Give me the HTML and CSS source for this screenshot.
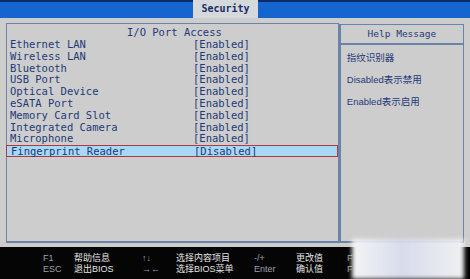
FILE: index.html
```html
<!DOCTYPE html>
<html lang="zh">
<head>
    <meta charset="UTF-8">
    <title>Security - I/O Port Access</title>
    <link rel="stylesheet" href="styles.css">
</head>
<body>
    <!-- Barre des onglets -->
    <div class="topbar">
        <div class="tab">Security</div>
    </div>

    <div class="main">
        <!-- Liste des ports -->
        <div class="panel-left">
            <div class="title">I/O Port Access</div>
            <div class="row"><span class="name">Ethernet LAN</span><span class="val">[Enabled]</span></div>
            <div class="row"><span class="name">Wireless LAN</span><span class="val">[Enabled]</span></div>
            <div class="row"><span class="name">Bluetooth</span><span class="val">[Enabled]</span></div>
            <div class="row"><span class="name">USB Port</span><span class="val">[Enabled]</span></div>
            <div class="row"><span class="name">Optical Device</span><span class="val">[Enabled]</span></div>
            <div class="row"><span class="name">eSATA Port</span><span class="val">[Enabled]</span></div>
            <div class="row"><span class="name">Memory Card Slot</span><span class="val">[Enabled]</span></div>
            <div class="row"><span class="name">Integrated Camera</span><span class="val">[Enabled]</span></div>
            <div class="row"><span class="name">Microphone</span><span class="val">[Enabled]</span></div>
            <div class="row selected"><span class="name">Fingerprint Reader</span><span class="val">[Disabled]</span></div>
        </div>

        <!-- Aide -->
        <div class="panel-right">
            <div class="help-title">Help Message</div>
            <div class="help-body">
                <p>指纹识别器</p>
                <p>Disabled表示禁用</p>
                <p>Enabled表示启用</p>
            </div>
        </div>
    </div>

    <!-- Touches -->
    <div class="footer">
        <span class="key">F1</span><span class="desc">帮助信息</span>
        <span class="key">↑↓</span><span class="desc">选择内容项目</span>
        <span class="key">-/+</span><span class="desc">更改值</span>
        <span class="key">F</span>
        <span class="key">ESC</span><span class="desc">退出BIOS</span>
        <span class="key">→←</span><span class="desc">选择BIOS菜单</span>
        <span class="key">Enter</span><span class="desc">确认值</span>
        <span class="key">F</span>
        <div class="watermark"></div>
    </div>
</body>
</html>
```

FILE: styles.css
```css
body {
    margin: 0;
    width: 470px;
    height: 279px;
    overflow: hidden;
    background-color: #cdcdcd;
    font-family: "DejaVu Sans Mono", "Noto Sans CJK SC", monospace;
    color: #1d3a78;
}
.topbar {
    height: 16px;
    background-color: #1565d0;
    border-top: 2px solid #0c2a6a;
    display: flex;
    padding-left: 193px;
}
.tab {
    width: 65px;
    margin-top: -2px;
    height: 18px;
    background-color: #d6d9dc;
    color: #1a2e66;
    font-weight: bold;
    font-size: 10px;
    text-align: center;
    line-height: 18px;
}
.main {
    display: flex;
    height: 220px;
    padding: 5px 6px 0 6px;
}
.panel-left {
    width: 333px;
    border: 1px solid #6a84a8;
    border-bottom-width: 2px;
    font-size: 10.5px;
}
.title {
    text-align: center;
    line-height: 12px;
    padding: 2px 0 0 4px;
    height: 13px;
}
.row {
    display: flex;
    height: 11.8px;
    line-height: 11.8px;
    padding-left: 3px;
    box-sizing: border-box;
}
.row .name {
    width: 183px;
}
.selected {
    background-color: #a9d8f6;
    border: 1px solid #b0383e;
    margin-left: -1px;
    padding-left: 4px;
}
.panel-right {
    width: 123px;
    margin-top: 1px;
    border: 1px solid #6a84a8;
    border-left: 2px solid #6a84a8;
    border-bottom-width: 2px;
    font-size: 9.5px;
}
.help-title {
    text-align: center;
    height: 18px;
    line-height: 18px;
    border-bottom: 2px solid #6a84a8;
    font-family: "DejaVu Sans Mono", monospace;
}
.help-body {
    padding: 7px 0 0 6px;
    font-family: "Liberation Sans", "Noto Sans CJK SC", sans-serif;
    font-size: 9.5px;
}
.help-body p {
    margin: 0 0 10px 0;
    line-height: 12px;
}
.footer {
    position: relative;
    margin-top: 4px;
    height: 34px;
    background-color: #050505;
    display: grid;
    grid-template-columns: 31px 68px 34px 78px 42px 51px 10px;
    grid-auto-rows: 11px;
    padding: 6px 0 0 43px;
    box-sizing: border-box;
    font-family: "Liberation Sans", "Noto Sans CJK SC", sans-serif;
    font-size: 9px;
    line-height: 11px;
}
.key {
    color: #9aa0a8;
}
.desc {
    color: #e6e6e6;
}
.watermark {
    position: absolute;
    left: 352px;
    top: -8px;
    width: 112px;
    height: 40px;
    background: linear-gradient(90deg, #f4f4f6, #d8dceb 45%, #f0f0f2);
    filter: blur(2px);
}
```
